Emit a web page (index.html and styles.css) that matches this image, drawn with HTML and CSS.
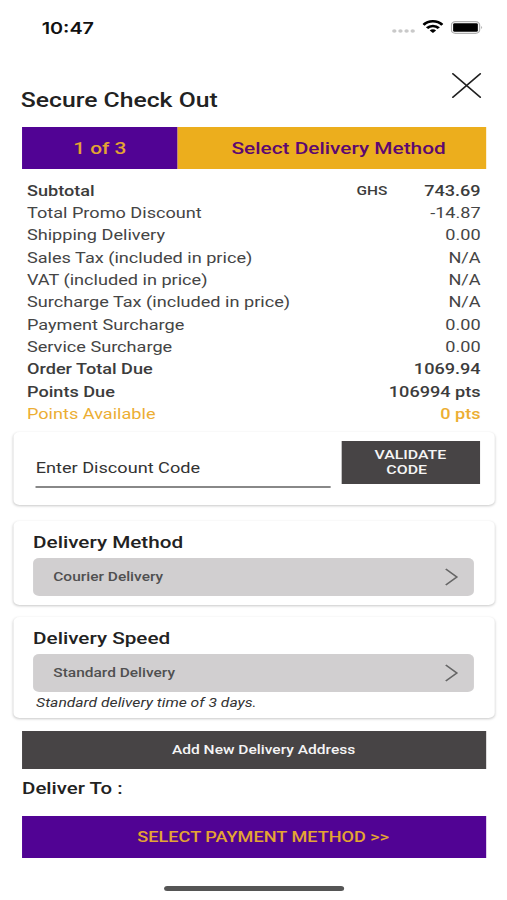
FILE: index.html
```html
<!DOCTYPE html>
<html lang="en">
<head>
<meta charset="utf-8">
<title>Secure Check Out</title>
<link rel="stylesheet" href="styles.css">
</head>
<body>
<main class="screen">
  <header class="status">
    <span class="time">10:47</span>
    <div class="status-icons">
      <svg class="signal" viewBox="0 0 19 4"><g fill="#c9c9c9"><circle cx="2" cy="2" r="1.8"/><circle cx="7" cy="2" r="1.8"/><circle cx="12" cy="2" r="1.8"/><circle cx="17" cy="2" r="1.8"/></g></svg>
      <svg class="wifi" viewBox="0 0 17 13" fill="none" stroke="#000" stroke-width="2.5"><path d="M.8 4.9C5 .1 12 .1 16.200 4.900"/><path d="M3.700 8.100C6.300 5.200 10.700 5.200 13.300 8.100"/><path d="M8.500 13L5.900 10.400C7.300 9 9.700 9 11.100 10.400Z" fill="#000" stroke="none"/></svg>
      <svg class="battery" viewBox="0 0 27 13"><rect x=".6" y=".6" width="23" height="11.800" rx="3.300" fill="#fff" stroke="#b0b0b0" stroke-width="1.100"/><rect x="2" y="2.200" width="20.200" height="8.600" rx="1.200"/><path d="M25 4.700q1.500 1.800 0 3.600z" fill="#999"/></svg>
    </div>
  </header>
  <div class="title-row">
    <h1>Secure Check Out</h1>
    <svg class="close" viewBox="0 0 24 25" fill="none" stroke="#222" stroke-width="1.500" stroke-linecap="round"><path d="M.8.800L23.200 24.200M23.200.800L.8 24.200"/></svg>
  </div>
  <div class="steps">
    <div class="step-count"><span>1 of 3</span></div>
    <div class="step-name"><span>Select Delivery Method</span></div>
  </div>
  <section class="totals">
    <div class="row strong"><span>Subtotal</span><span class="currency">GHS</span><span>743.69</span></div>
    <div class="row"><span>Total Promo Discount</span><span>-14.87</span></div>
    <div class="row"><span>Shipping Delivery</span><span>0.00</span></div>
    <div class="row"><span>Sales Tax (included in price)</span><span>N/A</span></div>
    <div class="row"><span>VAT (included in price)</span><span>N/A</span></div>
    <div class="row"><span>Surcharge Tax (included in price)</span><span>N/A</span></div>
    <div class="row"><span>Payment Surcharge</span><span>0.00</span></div>
    <div class="row"><span>Service Surcharge</span><span>0.00</span></div>
    <div class="row strong"><span>Order Total Due</span><span>1069.94</span></div>
    <div class="row strong"><span>Points Due</span><span>106994 pts</span></div>
    <div class="row points"><span>Points Available</span><span class="medium">0 pts</span></div>
  </section>
  <section class="card discount">
    <div class="code-field">Enter Discount Code</div>
    <button class="validate">VALIDATE<br><span class="validate-end">CODE</span></button>
  </section>
  <section class="card method">
    <h2>Delivery Method</h2>
    <div class="select"><span>Courier Delivery</span><svg class="chevron" viewBox="0 0 11 18"><path d="M1 1L10 9L1 17" fill="none" stroke="#666" stroke-width="1.500"/></svg></div>
  </section>
  <section class="card speed">
    <h2>Delivery Speed</h2>
    <div class="select"><span>Standard Delivery</span><svg class="chevron" viewBox="0 0 11 18"><path d="M1 1L10 9L1 17" fill="none" stroke="#666" stroke-width="1.500"/></svg></div>
    <p class="note">Standard delivery time of 3 days.</p>
  </section>
  <button class="add-address">Add New Delivery Address</button>
  <h2 class="deliver-to">Deliver To :</h2>
  <button class="pay">SELECT PAYMENT METHOD &gt;&gt;</button>
  <div class="home-bar"></div>
</main>
</body>
</html>
```
FILE: styles.css
```css
* { box-sizing: border-box; margin: 0; }
body { width: 507px; height: 900px; overflow: hidden; background: #fff; }
.screen {
  width: 414px; height: 900px;
  transform: scaleX(1.22464); transform-origin: 0 0;
  display: flex; flex-direction: column;
  font-family: Roboto, "Liberation Sans", sans-serif;
  font-size: 14.800px; color: #454545;
}
button { border: 0; border-radius: 0; padding: 0; font: inherit; font-weight: 500; display: block; }
.status { height: 54px; padding: 0 19px 0 34px; display: flex; justify-content: space-between; align-items: center; flex: none; }
.time { font: 600 16.200px Inter, sans-serif; color: #111; margin-top: 1px; }
.status-icons { display: flex; align-items: center; gap: 6px; }
.status-icons svg { display: block; }
.signal { width: 19px; height: 4px; margin-top: 8px; }
.wifi { width: 17px; height: 13px; margin-top: -1px; }
.battery { width: 27px; height: 13px; }
.title-row { height: 72.500px; padding: 18.500px 21px 0 17px; display: flex; justify-content: space-between; align-items: flex-start; flex: none; }
h1 { font-size: 20.200px; line-height: 26px; margin-top: 14px; font-weight: 500; color: #222; }
.close { width: 24px; height: 25px; }
.steps { height: 42.500px; margin: 0 17px 0 18px; display: flex; font-size: 17px; font-weight: 500; line-height: 43px; text-align: center; flex: none; }
.step-count { width: 127px; background: #510394; color: #e4a532; }
.step-name { flex: 1; background: #ecae1d; color: #5d0870; padding-left: 11px; }
.totals { padding: 10.500px 21.500px 0 22px; height: 262px; flex: none; }
.row { display: flex; justify-content: space-between; height: 22.360px; line-height: 22.360px; }
.strong, .medium { font-weight: 500; }
.strong { color: #3c3c3c; }
.currency { font-size: 12.600px; margin-left: auto; margin-right: 30px; }
.points { color: #ecae33; }
.card { margin: 0 10px 0 11.200px; background: #fff; border-radius: 5px; box-shadow: 0 1px 2.500px rgba(0,0,0,.22); flex: none; }
.discount { height: 73.500px; margin-top: .5px; padding: 9.500px 12.400px 0 18px; display: flex; justify-content: space-between; }
.code-field { width: 241px; height: 47px; border-bottom: 2px solid #888; line-height: 55px; color: #333; }
.validate { width: 113px; height: 42.500px; background: #474445; color: #f5f5f5; font-size: 13px; line-height: 15px; }
.validate-end { margin-right: 6px; }
.method { height: 83.500px; margin-top: 16px; padding: 9px 17px 0 15.800px; }
.speed { height: 100.500px; margin-top: 12.500px; padding: 9px 17px 0 15.800px; }
h2 { font-size: 16.900px; line-height: 25px; font-weight: 500; color: #222; }
.select { height: 38px; margin-top: 2.500px; padding: 0 13px 0 16.500px; border-radius: 5px; background: #d1cfd0; display: flex; align-items: center; justify-content: space-between; font-size: 12.650px; font-weight: 500; color: #505050; }
.chevron { width: 11px; height: 18px; }
.note { font-size: 12.800px; font-style: italic; line-height: 20px; margin: 1.500px 0 0 2.500px; color: #333; }
.add-address { height: 37.500px; margin: 13.500px 17px 0 18px; padding-left: 15.500px; background: #474445; color: #f5f5f5; font-size: 12.700px; flex: none; }
.deliver-to { font-size: 16.700px; margin: 7.500px 0 0 18px; }
.pay { height: 42.500px; margin: 14.500px 17px 0 18px; padding: 1px 0 0 15px; background: #510394; color: #e4a532; font-size: 14.800px; flex: none; }
.home-bar { width: 147px; height: 5px; margin: 27.500px 0 0 134px; border-radius: 3px; background: #555; flex: none; }
```
